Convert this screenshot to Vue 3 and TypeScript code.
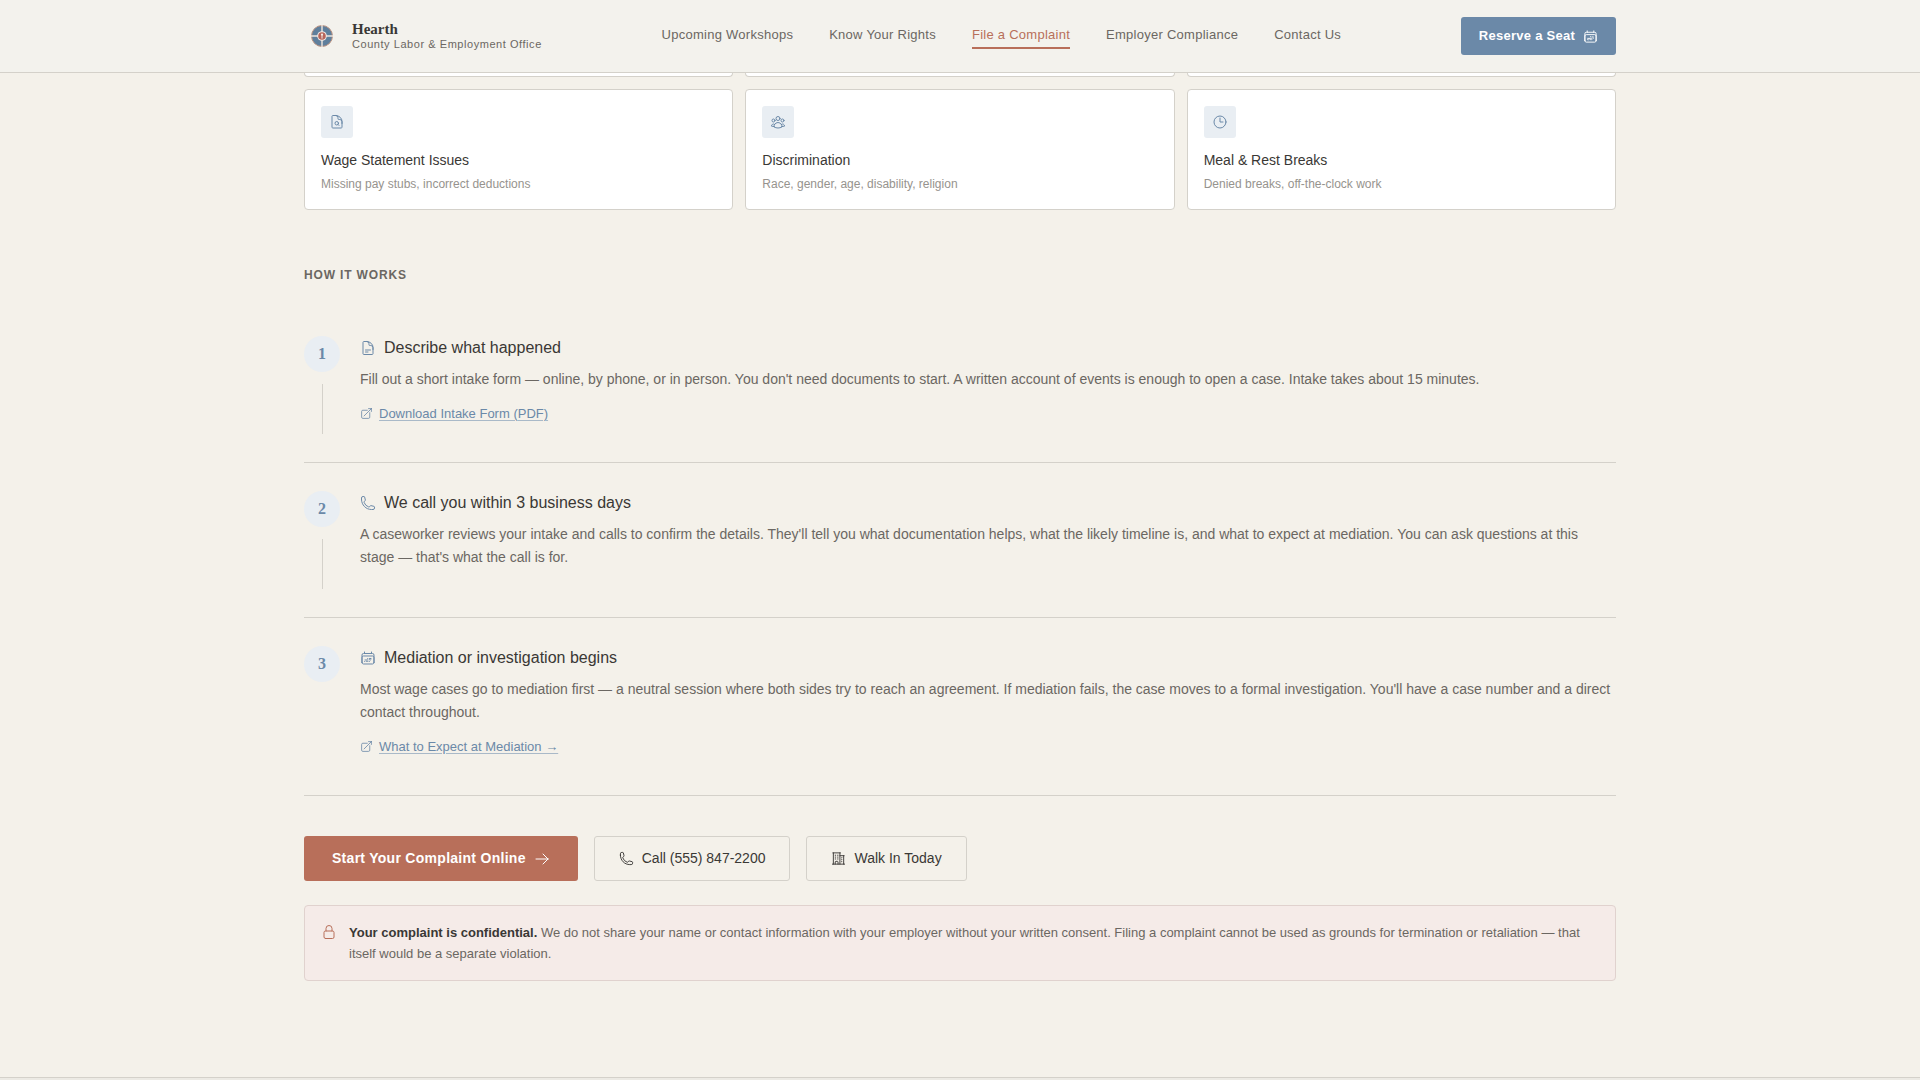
<script setup lang="ts">
import { h, type FunctionalComponent } from 'vue'

interface Issue {
  title: string
  note: string
  icon: string
}

interface Step {
  title: string
  text: string
  icon: string
  link?: string
}

const paths: Record<string, string> = {
  docSearch:
    'M19.5 14.25v-2.625a3.375 3.375 0 0 0-3.375-3.375h-1.5A1.125 1.125 0 0 1 13.5 7.125v-1.5a3.375 3.375 0 0 0-3.375-3.375H8.25m5.231 13.481L15 17.25m-4.5-15H5.625c-.621 0-1.125.504-1.125 1.125v16.5c0 .621.504 1.125 1.125 1.125h12.75c.621 0 1.125-.504 1.125-1.125V11.25a9 9 0 0 0-9-9Zm3.75 11.625a2.625 2.625 0 1 1-5.25 0 2.625 2.625 0 0 1 5.25 0Z',
  group:
    'M18 18.72a9.094 9.094 0 0 0 3.741-.479 3 3 0 0 0-4.682-2.72m.94 3.198.001.031c0 .225-.012.447-.037.666A11.944 11.944 0 0 1 12 21c-2.17 0-4.207-.576-5.963-1.584A6.062 6.062 0 0 1 6 18.719m12 0a5.971 5.971 0 0 0-.941-3.197m0 0A5.995 5.995 0 0 0 12 12.75a5.995 5.995 0 0 0-5.058 2.772m0 0a3 3 0 0 0-4.681 2.72 8.986 8.986 0 0 0 3.74.477m.94-3.197a5.971 5.971 0 0 0-.94 3.197M15 6.75a3 3 0 1 1-6 0 3 3 0 0 1 6 0Zm6 3a2.25 2.25 0 1 1-4.5 0 2.25 2.25 0 0 1 4.5 0Zm-13.5 0a2.25 2.25 0 1 1-4.5 0 2.25 2.25 0 0 1 4.5 0Z',
  clock: 'M12 6v6h4.5m4.5 0a9 9 0 1 1-18 0 9 9 0 0 1 18 0Z',
  doc:
    'M19.5 14.25v-2.625a3.375 3.375 0 0 0-3.375-3.375h-1.5A1.125 1.125 0 0 1 13.5 7.125v-1.5a3.375 3.375 0 0 0-3.375-3.375H8.25m0 12.75h7.5m-7.5 3H12M10.5 2.25H5.625c-.621 0-1.125.504-1.125 1.125v17.25c0 .621.504 1.125 1.125 1.125h12.75c.621 0 1.125-.504 1.125-1.125V11.25a9 9 0 0 0-9-9Z',
  phone:
    'M2.25 6.75c0 8.284 6.716 15 15 15h2.25a2.25 2.25 0 0 0 2.25-2.25v-1.372c0-.516-.351-.966-.852-1.091l-4.423-1.106c-.44-.11-.902.055-1.173.417l-.97 1.293c-.282.376-.769.542-1.21.38a12.035 12.035 0 0 1-7.143-7.143c-.162-.441.004-.928.38-1.21l1.293-.97c.363-.271.527-.734.417-1.173L6.963 3.102a1.125 1.125 0 0 0-1.091-.852H4.5A2.25 2.25 0 0 0 2.25 4.5v2.25Z',
  calendar:
    'M6.75 2.994v2.25m10.5-2.25v2.25m-14.252 13.5V7.491a2.25 2.25 0 0 1 2.25-2.25h13.5a2.25 2.25 0 0 1 2.25 2.25v11.251m-18 0a2.25 2.25 0 0 0 2.25 2.25h13.5a2.25 2.25 0 0 0 2.25-2.25m-18 0v-7.5a2.25 2.25 0 0 1 2.25-2.25h13.5a2.25 2.25 0 0 1 2.25 2.25v7.5m-6.75-6h2.25m-9 2.25h4.5m.002-2.25h.005v.006H12v-.006Zm-.001 4.5h.006v.006h-.006v-.005Zm-2.25.001h.005v.006H9.75v-.006Zm-2.25 0h.005v.005h-.006v-.005Zm6.75-2.247h.005v.005h-.005v-.005Zm0 2.247h.006v.006h-.006v-.006Zm2.25-2.248h.006V15H16.5v-.005Z',
  external:
    'M13.5 6H5.25A2.25 2.25 0 0 0 3 8.25v10.5A2.25 2.25 0 0 0 5.25 21h10.5A2.25 2.25 0 0 0 18 18.75V10.5m-10.5 6L21 3m0 0h-5.25M21 3v5.25',
  arrow: 'M13.5 4.5 21 12m0 0-7.5 7.5M21 12H3',
  building:
    'M2.25 21h19.5m-18-18v18m10.5-18v18m6-13.5V21M6.75 6.75h.75m-.75 3h.75m-.75 3h.75m3-6h.75m-.75 3h.75m-.75 3h.75M6.75 21v-3.375c0-.621.504-1.125 1.125-1.125h2.25c.621 0 1.125.504 1.125 1.125V21M3 3h12m-.75 4.5H21m-3.75 3.75h.008v.008h-.008v-.008Zm0 3h.008v.008h-.008v-.008Zm0 3h.008v.008h-.008v-.008Z',
  lock:
    'M16.5 10.5V6.75a4.5 4.5 0 1 0-9 0v3.75m-.75 11.25h10.5a2.25 2.25 0 0 0 2.25-2.25v-6.75a2.25 2.25 0 0 0-2.25-2.25H6.75a2.25 2.25 0 0 0-2.25 2.25v6.75a2.25 2.25 0 0 0 2.25 2.25Z',
}

const Icon: FunctionalComponent<{ name: string; size?: number }> = (props) =>
  h(
    'svg',
    {
      width: props.size ?? 16,
      height: props.size ?? 16,
      viewBox: '0 0 24 24',
      fill: 'none',
      stroke: 'currentColor',
      'stroke-width': 1.5,
      'stroke-linecap': 'round',
      'stroke-linejoin': 'round',
      'aria-hidden': 'true',
    },
    [h('path', { d: paths[props.name] })],
  )
Icon.props = ['name', 'size']

const navLinks = ['Upcoming Workshops', 'Know Your Rights', 'File a Complaint', 'Employer Compliance', 'Contact Us']
const activeLink = 'File a Complaint'

const issues: Issue[] = [
  { title: 'Wage Statement Issues', note: 'Missing pay stubs, incorrect deductions', icon: 'docSearch' },
  { title: 'Discrimination', note: 'Race, gender, age, disability, religion', icon: 'group' },
  { title: 'Meal & Rest Breaks', note: 'Denied breaks, off-the-clock work', icon: 'clock' },
]

const steps: Step[] = [
  {
    title: 'Describe what happened',
    text: "Fill out a short intake form — online, by phone, or in person. You don't need documents to start. A written account of events is enough to open a case. Intake takes about 15 minutes.",
    icon: 'doc',
    link: 'Download Intake Form (PDF)',
  },
  {
    title: 'We call you within 3 business days',
    text: "A caseworker reviews your intake and calls to confirm the details. They'll tell you what documentation helps, what the likely timeline is, and what to expect at mediation. You can ask questions at this stage — that's what the call is for.",
    icon: 'phone',
  },
  {
    title: 'Mediation or investigation begins',
    text: "Most wage cases go to mediation first — a neutral session where both sides try to reach an agreement. If mediation fails, the case moves to a formal investigation. You'll have a case number and a direct contact throughout.",
    icon: 'calendar',
    link: 'What to Expect at Mediation →',
  },
]
</script>

<template>
  <div class="page">
    <header class="site-header">
      <div class="wrap header-row">
        <a href="#" class="brand">
          <svg class="brand-mark" width="36" height="36" viewBox="0 0 36 36" aria-hidden="true">
            <circle cx="18" cy="18" r="10.5" fill="#5f7f9c" stroke="#bd9583" stroke-width="1" />
            <path d="M18 7v22M7 18h22" stroke="#f0e6de" stroke-width="1.4" />
            <circle cx="18" cy="18" r="4.8" fill="#f4ece6" />
            <circle cx="18" cy="18" r="3.8" fill="#b8655a" />
            <path d="M18 17v3.6" stroke="#f4ece6" stroke-width="1" />
            <circle cx="18" cy="16.6" r="1.1" fill="#f4ece6" />
          </svg>
          <span class="brand-text">
            <span class="brand-name">Hearth</span>
            <span class="brand-sub">County Labor &amp; Employment Office</span>
          </span>
        </a>
        <nav class="nav">
          <a v-for="link in navLinks" :key="link" href="#" :class="{ active: link === activeLink }">{{ link }}</a>
        </nav>
        <button type="button" class="btn reserve">Reserve a Seat <Icon name="calendar" :size="15" /></button>
      </div>
    </header>

    <main class="wrap">
      <div class="grid tails" aria-hidden="true">
        <div v-for="n in 3" :key="n" class="tail"></div>
      </div>
      <div class="grid">
        <article v-for="issue in issues" :key="issue.title" class="card">
          <div class="card-icon"><Icon :name="issue.icon" /></div>
          <h3>{{ issue.title }}</h3>
          <p>{{ issue.note }}</p>
        </article>
      </div>

      <h2 class="label">How It Works</h2>
      <ol class="steps">
        <li v-for="(step, i) in steps" :key="step.title" class="step">
          <div class="rail">
            <span class="num">{{ i + 1 }}</span>
            <span v-if="i < steps.length - 1" class="line"></span>
          </div>
          <div class="step-body">
            <h3><Icon :name="step.icon" />{{ step.title }}</h3>
            <p>{{ step.text }}</p>
            <a v-if="step.link" href="#" class="step-link"><Icon name="external" :size="13" /><span>{{ step.link }}</span></a>
          </div>
        </li>
      </ol>

      <div class="actions">
        <button type="button" class="btn primary">Start Your Complaint Online <Icon name="arrow" /></button>
        <button type="button" class="btn outline"><Icon name="phone" :size="15" /> Call (555) 847-2200</button>
        <button type="button" class="btn outline"><Icon name="building" :size="15" /> Walk In Today</button>
      </div>

      <aside class="notice">
        <Icon name="lock" />
        <p>
          <strong>Your complaint is confidential.</strong> We do not share your name or contact information with your
          employer without your written consent. Filing a complaint cannot be used as grounds for termination or
          retaliation — that itself would be a separate violation.
        </p>
      </aside>
    </main>
    <footer class="site-footer"></footer>
  </div>
</template>

<style>
body {
  margin: 0;
  background: #f4f1ea;
}
</style>

<style scoped>
.page {
  display: flex;
  flex-direction: column;
  height: 100vh;
  overflow: hidden;
  font-family: "Liberation Sans", Arial, sans-serif;
  color: #3a3835;
  background: #f4f1ea;
}
h2,
h3,
p,
ol {
  margin: 0;
  padding: 0;
  font-weight: 400;
}
a {
  color: inherit;
  text-decoration: none;
}
svg {
  flex: none;
  display: block;
}
.wrap {
  width: 100%;
  max-width: 1440px;
  margin: 0 auto;
  padding: 0 64px;
  box-sizing: border-box;
}
.site-header {
  flex: none;
  background: #f3f2ed;
  border-bottom: 1px solid #d4d1ca;
}
.header-row {
  display: flex;
  align-items: center;
  justify-content: space-between;
  height: 72px;
}
.brand {
  display: flex;
  align-items: center;
  gap: 12px;
}
.brand-text {
  display: flex;
  flex-direction: column;
}
.brand-name {
  font: 700 15px/16px "Liberation Serif", "Times New Roman", serif;
}
.brand-sub {
  font-size: 11px;
  line-height: 14px;
  letter-spacing: 0.05em;
  color: #6b6762;
}
.nav {
  display: flex;
  gap: 36px;
}
.nav a {
  font-size: 13px;
  line-height: 20px;
  letter-spacing: 0.02em;
  color: #6b6762;
  padding: 2px 0;
  border-bottom: 2px solid transparent;
}
.nav a.active {
  color: #b86f5a;
  border-color: #b86f5a;
}
.btn {
  display: inline-flex;
  align-items: center;
  gap: 8px;
  border: 0;
  border-radius: 3px;
  font-family: inherit;
  font-size: 14px;
  line-height: 21px;
  white-space: nowrap;
}
.reserve {
  padding: 9px 18px;
  font-size: 13px;
  line-height: 20px;
  font-weight: 700;
  letter-spacing: 0.02em;
  color: #fff;
  background: #6b89a8;
}
.grid {
  display: grid;
  grid-template-columns: repeat(3, 1fr);
  gap: 12px;
}
.tails {
  margin-bottom: 12px;
}
.tail {
  height: 3px;
  background: #fff;
  border: 1px solid #d4d1ca;
  border-top: 0;
  border-radius: 0 0 4px 4px;
}
.card {
  padding: 16px;
  background: #fff;
  border: 1px solid #d4d1ca;
  border-radius: 4px;
}
.card-icon {
  display: flex;
  align-items: center;
  justify-content: center;
  width: 32px;
  height: 32px;
  margin-bottom: 12px;
  border-radius: 3px;
  color: #6b89a8;
  background: #e9eef3;
}
.card h3 {
  font-size: 14px;
  line-height: 21px;
}
.card p {
  margin-top: 4px;
  font-size: 12px;
  line-height: 18px;
  color: #96938e;
}
.label {
  margin: 56px 0 24px;
  font-size: 12px;
  line-height: 18px;
  font-weight: 700;
  letter-spacing: 0.07em;
  text-transform: uppercase;
  color: #6b6762;
}
.steps {
  list-style: none;
}
.step {
  display: flex;
  gap: 20px;
  padding: 28px 0;
  border-bottom: 1px solid #d4d1ca;
}
.rail {
  flex: none;
  display: flex;
  flex-direction: column;
  align-items: center;
  width: 36px;
}
.num {
  width: 36px;
  height: 36px;
  border-radius: 50%;
  background: #e9eef3;
  color: #6b89a8;
  font: 700 16px/36px "Liberation Serif", "Times New Roman", serif;
  text-align: center;
}
.line {
  flex: 1;
  width: 1px;
  min-height: 50px;
  margin-top: 12px;
  background: #d4d1ca;
}
.step-body {
  padding-bottom: 10px;
}
.step h3 {
  display: flex;
  align-items: center;
  gap: 8px;
  font-size: 16px;
  line-height: 24px;
}
.step h3 svg {
  color: #6b89a8;
}
.step p {
  margin-top: 8px;
  font-size: 14px;
  line-height: 23px;
  color: #6b6762;
}
.step-link {
  display: flex;
  align-items: center;
  gap: 6px;
  width: fit-content;
  margin-top: 12px;
  font-size: 13px;
  line-height: 21px;
  color: #6b89a8;
}
.step-link span {
  text-decoration: underline;
  text-decoration-color: #a9b9c8;
  text-decoration-thickness: 1px;
  text-underline-offset: 2px;
}
.actions {
  display: flex;
  flex-wrap: wrap;
  gap: 16px;
  margin: 40px 0 24px;
}
.primary {
  padding: 12px 28px;
  font-weight: 700;
  letter-spacing: 0.02em;
  color: #fff;
  background: #b86f5a;
}
.outline {
  padding: 11px 24px;
  color: #3a3835;
  background: transparent;
  border: 1px solid #d4d1ca;
}
.notice {
  display: flex;
  gap: 12px;
  padding: 16px;
  background: #f5ebe8;
  border: 1px solid #e0d2ce;
  border-radius: 4px;
}
.notice svg {
  margin-top: 2px;
  color: #b86f5a;
}
.notice p {
  font-size: 13px;
  line-height: 21px;
  color: #6b6762;
}
.notice strong {
  color: #3a3835;
}
.site-footer {
  flex: 1 0 auto;
  margin-top: 96px;
  background: #eceae4;
  border-top: 1px solid #d4d1ca;
}
</style>
